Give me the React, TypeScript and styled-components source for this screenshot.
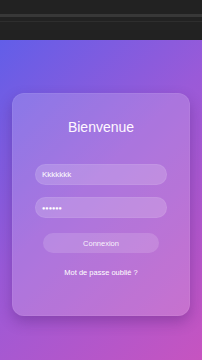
import React from "react";
import styled, { createGlobalStyle } from "styled-components";

const Global = createGlobalStyle`
  html, body { margin: 0; padding: 0; background: #232323; }
  body { font-family: "Liberation Sans", Arial, sans-serif; }
  * { box-sizing: border-box; }
`;

const Page = styled.div`
  width: 202px;
  height: 360px;
  display: flex;
  flex-direction: column;
  overflow: hidden;
`;

const TopBar = styled.div`
  height: 40px;
  background: #222222;
  display: flex;
  flex-direction: column;
  padding-top: 14px;
  gap: 4px;
`;

const BarLine = styled.div<{ $h: number; $c: string }>`
  height: ${(p) => p.$h}px;
  background: ${(p) => p.$c};
`;

const Stage = styled.div`
  flex: 1;
  background: linear-gradient(135deg, #625ee8 0%, #9a5ad8 45%, #c654c0 100%);
  padding: 53px 12px 0 12px;
`;

const Card = styled.div`
  height: 223px;
  border-radius: 12px;
  background: rgba(255, 255, 255, 0.17);
  border: 1px solid rgba(255, 255, 255, 0.06);
  box-shadow: 0 6px 14px rgba(60, 20, 100, 0.3);
  display: flex;
  flex-direction: column;
  align-items: center;
  padding-top: 25px;
`;

const Title = styled.h1`
  margin: 0;
  font-size: 14px;
  line-height: 16px;
  font-weight: 400;
  color: #fff8ff;
`;

const Field = styled.div<{ $mt: number }>`
  margin-top: ${(p) => p.$mt}px;
  width: 132px;
  height: 21px;
  border-radius: 11px;
  background: rgba(255, 255, 255, 0.18);
  border: 1px solid rgba(255, 255, 255, 0.06);
  display: flex;
  align-items: center;
  padding-left: 6px;
  font-size: 8px;
  color: #ffffff;
`;

const Dots = styled.span`
  font-size: 5.5px;
`;

const Button = styled.div`
  margin-top: 15px;
  width: 116px;
  height: 20px;
  border-radius: 10px;
  background: rgba(255, 255, 255, 0.15);
  display: flex;
  align-items: center;
  justify-content: center;
  font-size: 7.5px;
  color: rgba(255, 255, 255, 0.92);
`;

const Link = styled.div`
  margin-top: 15px;
  font-size: 7.5px;
  color: #ffffff;
`;

export default function App() {
  return (
    <Page>
      <Global />
      <TopBar>
        <BarLine $h={3} $c="#383838" />
        <BarLine $h={1} $c="#2e2e2e" />
      </TopBar>
      <Stage>
        <Card>
          <Title>Bienvenue</Title>
          <Field $mt={29}>Kkkkkkk</Field>
          <Field $mt={12}>
            <Dots>●●●●●●</Dots>
          </Field>
          <Button>Connexion</Button>
          <Link>Mot de passe oublié ?</Link>
        </Card>
      </Stage>
    </Page>
  );
}
